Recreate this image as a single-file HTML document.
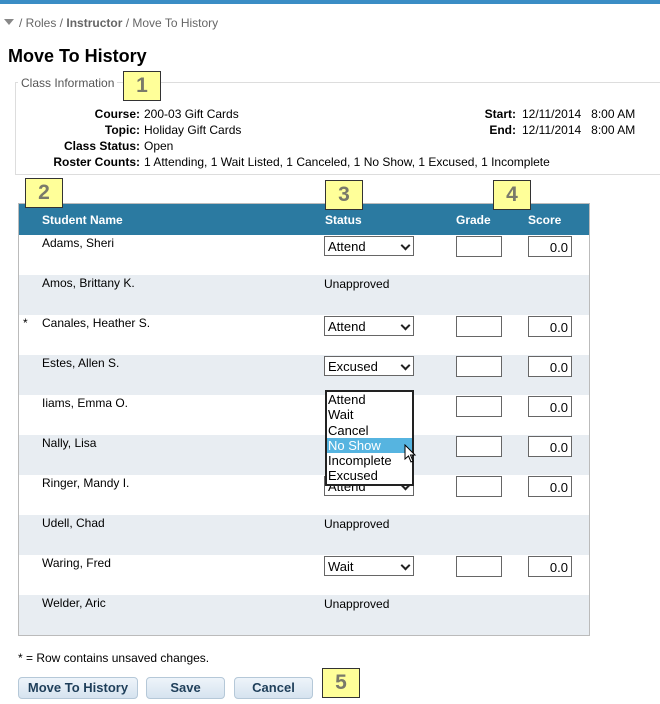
<!DOCTYPE html><html><head><style>
*{box-sizing:border-box}body{margin:0;width:660px;height:704px;overflow:hidden;background:#fff;font-family:"Liberation Sans",Arial,sans-serif;font-size:12px;color:#000;position:relative}
.a{position:absolute}
.y{position:absolute;background:#ffff99;border:1px solid #333;font-size:21px;font-weight:bold;color:#7a7a6a;text-align:center;line-height:28px;width:38px;height:30px}
.row{position:absolute;left:19px;width:570px;height:40px}
.g{background:#e8edf2}
.nm{position:absolute;left:23px;top:1px}
.sel{position:absolute;left:305px;top:1px;width:90px;height:20px;border:1px solid #666;background:#fff;padding:2px 3px;font-size:13px}
.sel:after{content:"";position:absolute;right:4px;top:5px;width:5px;height:5px;border-right:2px solid #222;border-bottom:2px solid #222;transform:rotate(45deg)}
.gr{position:absolute;left:437px;top:1px;width:46px;height:21px;border:1px solid #666;background:#fff}
.sc{position:absolute;left:509px;top:1px;width:44px;height:21px;border:1px solid #666;background:#fff;text-align:right;padding:3px 3px 0 0;font-size:13px}
.un{position:absolute;left:305px;top:2px}
.b{position:absolute;top:677px;height:22px;border:1px solid #b5c8d8;border-radius:4px;background:linear-gradient(#eef4fa,#d6e3ef);color:#1f3f5a;font-weight:bold;font-size:13px;text-align:center;line-height:20px}
.lab{position:absolute;font-weight:bold;text-align:right}
</style></head><body>
<div class="a" style="left:0;top:0;width:660px;height:4px;background:#3a8dc5"></div>
<div class="a" style="left:4px;top:19px;width:0;height:0;border-left:5px solid transparent;border-right:5px solid transparent;border-top:6px solid #888"></div>
<div class="a" style="left:19px;top:16px;color:#666">/ Roles / <b>Instructor</b> / Move To History</div>
<div class="a" style="left:8px;top:46px;font-size:18px;font-weight:bold">Move To History</div>
<div class="a" style="left:15px;top:82px;width:646px;height:93px;border:1px solid #ddd"></div>
<div class="a" style="left:18px;top:76px;background:#fff;color:#555;padding:0 3px">Class Information</div>
<div class="lab" style="left:40px;top:106px;width:100px;line-height:16px">Course:<br>Topic:<br>Class Status:<br>Roster Counts:</div>
<div class="a" style="left:144px;top:106px;line-height:16px">200-03 Gift Cards<br>Holiday Gift Cards<br>Open<br>1 Attending, 1 Wait Listed, 1 Canceled, 1 No Show, 1 Excused, 1 Incomplete</div>
<div class="lab" style="left:440px;top:106px;width:76px;line-height:16px">Start:<br>End:</div>
<div class="a" style="left:522px;top:106px;line-height:16px">12/11/2014&nbsp;&nbsp;&nbsp;8:00 AM<br>12/11/2014&nbsp;&nbsp;&nbsp;8:00 AM</div>
<div class="a" style="left:18px;top:203px;width:572px;height:433px;border:1px solid #bbb"></div>
<div class="a" style="left:19px;top:204px;width:570px;height:31px;background:#2b7aa1;color:#fff;font-weight:bold">
<span class="a" style="left:23px;top:9px">Student Name</span><span class="a" style="left:306px;top:9px">Status</span><span class="a" style="left:437px;top:9px">Grade</span><span class="a" style="left:509px;top:9px">Score</span></div>
<div class="row" style="top:235px"><span class="nm">Adams, Sheri</span><div class="sel">Attend</div><div class="gr"></div><div class="sc">0.0</div></div>
<div class="row g" style="top:275px"><span class="nm">Amos, Brittany K.</span><span class="un">Unapproved</span></div>
<div class="row" style="top:315px"><span class="a" style="left:4px;top:1px">*</span><span class="nm">Canales, Heather S.</span><div class="sel">Attend</div><div class="gr"></div><div class="sc">0.0</div></div>
<div class="row g" style="top:355px"><span class="nm">Estes, Allen S.</span><div class="sel">Excused</div><div class="gr"></div><div class="sc">0.0</div></div>
<div class="row" style="top:395px"><span class="nm">Iiams, Emma O.</span><div class="gr"></div><div class="sc">0.0</div></div>
<div class="row g" style="top:435px"><span class="nm">Nally, Lisa</span><div class="gr"></div><div class="sc">0.0</div></div>
<div class="row" style="top:475px"><span class="nm">Ringer, Mandy I.</span><div class="sel">Attend</div><div class="gr"></div><div class="sc">0.0</div></div>
<div class="row g" style="top:515px"><span class="nm">Udell, Chad</span><span class="un">Unapproved</span></div>
<div class="row" style="top:555px"><span class="nm">Waring, Fred</span><div class="sel">Wait</div><div class="gr"></div><div class="sc">0.0</div></div>
<div class="row g" style="top:595px"><span class="nm">Welder, Aric</span><span class="un">Unapproved</span></div>
<div class="a" style="left:325px;top:390px;width:89px;height:96px;border:2px solid #222;background:#fff;font-size:13px;line-height:15.3px">
<div style="padding-left:1px">Attend</div><div style="padding-left:1px">Wait</div><div style="padding-left:1px">Cancel</div><div style="padding-left:1px;background:#56b4e0;color:#fff">No Show</div><div style="padding-left:1px">Incomplete</div><div style="padding-left:1px">Excused</div></div>
<svg class="a" style="left:404px;top:444px" width="14" height="20" viewBox="0 0 14 20"><path d="M1 1 L1 15 L4.5 12 L7 18 L9 17 L6.5 11 L11 11 Z" fill="#fff" stroke="#000" stroke-width="1"/></svg>
<div class="a" style="left:18px;top:651px">* = Row contains unsaved changes.</div>
<div class="b" style="left:18px;width:120px">Move To History</div>
<div class="b" style="left:146px;width:79px">Save</div>
<div class="b" style="left:234px;width:79px">Cancel</div>
<div class="y" style="left:123px;top:71px">1</div>
<div class="y" style="left:25px;top:178px">2</div>
<div class="y" style="left:325px;top:180px">3</div>
<div class="y" style="left:493px;top:180px">4</div>
<div class="y" style="left:322px;top:668px">5</div>
</body></html>
